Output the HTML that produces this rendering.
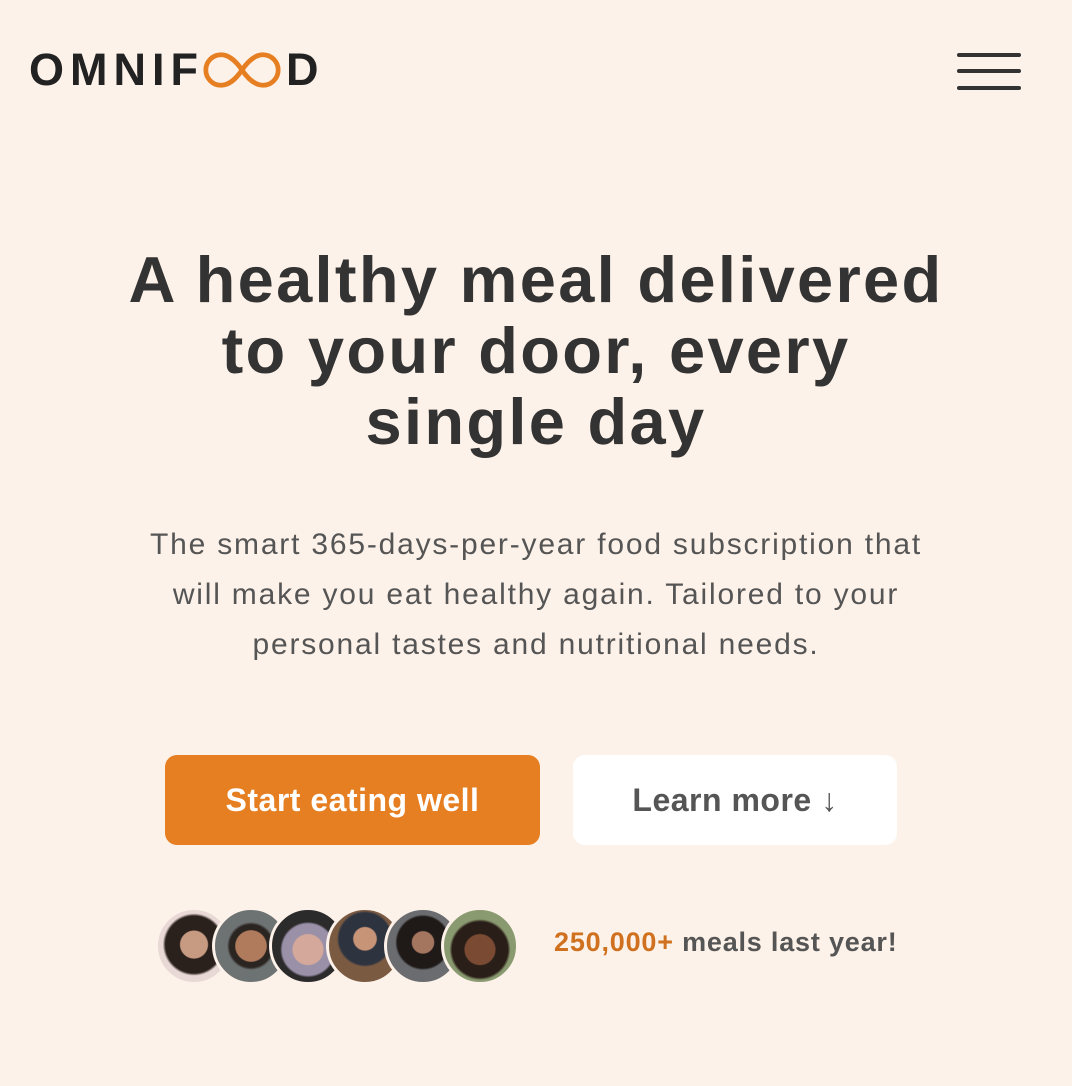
<!DOCTYPE html>
<html><head><meta charset="utf-8"><style>
*{margin:0;padding:0;box-sizing:border-box}
body{width:1072px;height:1086px;background:#fdf2e9;font-family:"Liberation Sans",sans-serif;color:#333;position:relative;overflow:hidden}
.logo{position:absolute;left:29px;top:46px;font-size:45px;font-weight:bold;letter-spacing:6px;color:#222;display:flex;align-items:center;line-height:48px}
.logo svg{margin:0 4px 0 -2px}
.ham{position:absolute;left:957px;width:64px;height:4px;background:#333;border-radius:2px}
h1{position:absolute;top:244px;left:0;width:1072px;text-align:center;font-size:65px;line-height:71px;font-weight:bold;color:#333;letter-spacing:2.3px}
p{position:absolute;top:520px;left:0;width:1072px;text-align:center;font-size:30px;line-height:50px;color:#555;letter-spacing:1.8px}
.btn{position:absolute;top:755px;height:90px;border-radius:12px;font-size:32px;font-weight:bold;display:flex;align-items:center;justify-content:center;letter-spacing:0.5px}
.b1{left:165px;width:375px;background:#e67e22;color:#fff}
.b2{left:573px;width:324px;background:#fff;color:#555}
.av{position:absolute;top:907px;width:78px;height:78px;border-radius:50%;border:3px solid #fdf2e9}
.meals{position:absolute;left:554px;top:927px;font-size:27px;font-weight:bold;color:#555;letter-spacing:0.8px}
.meals span{color:#cf711f}
</style></head><body>
<div class="logo">OMNIF<svg width="80" height="40" viewBox="0 0 84 40"><path d="M42 20 C34 8 26 4 20 4 A16 16 0 0 0 20 36 C26 36 34 32 42 20 C50 8 58 4 64 4 A16 16 0 0 1 64 36 C58 36 50 32 42 20Z" fill="none" stroke="#e67e22" stroke-width="5"/></svg>D</div>
<div class="ham" style="top:53px"></div><div class="ham" style="top:69px"></div><div class="ham" style="top:86px"></div>
<h1>A healthy meal delivered<br>to your door, every<br>single day</h1>
<p>The smart 365-days-per-year food subscription that<br>will make you eat healthy again. Tailored to your<br>personal tastes and nutritional needs.</p>
<div class="btn b1">Start eating well</div>
<div class="btn b2">Learn more ↓</div>
<div class="av" style="left:155px;background:radial-gradient(circle at 50% 48%,#c79a82 0 26%,#2a201c 28% 55%,#e8d8d6 60%)"></div>
<div class="av" style="left:212px;background:radial-gradient(circle at 50% 50%,#b07a5c 0 30%,#2b2522 32% 42%,#6d7272 47%)"></div>
<div class="av" style="left:269px;background:radial-gradient(circle at 50% 55%,#d4a89a 0 28%,#9a90a8 30% 48%,#2c2b2c 52%)"></div>
<div class="av" style="left:326px;background:radial-gradient(circle at 50% 40%,#c89478 0 20%,#2d3440 22% 46%,#7b5a42 50%)"></div>
<div class="av" style="left:384px;background:radial-gradient(circle at 50% 45%,#a47660 0 20%,#1f1a18 22% 48%,#6a6c70 52%)"></div>
<div class="av" style="left:441px;background:radial-gradient(circle at 50% 55%,#7a4a32 0 28%,#2a1e18 30% 52%,#8a9a70 57%)"></div>
<div class="meals"><span>250,000+</span> meals last year!</div>
</body></html>
